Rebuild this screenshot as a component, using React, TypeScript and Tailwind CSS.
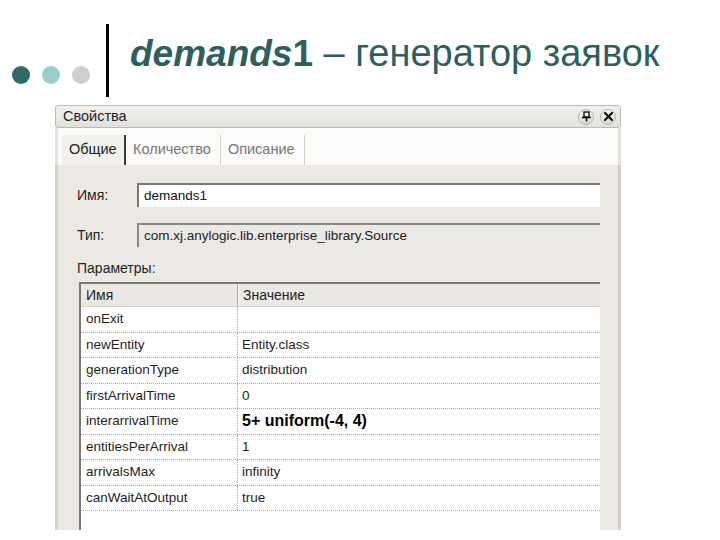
import React from "react";

const rows: { name: string; value: string; bold?: boolean }[] = [
  { name: "onExit", value: "" },
  { name: "newEntity", value: "Entity.class" },
  { name: "generationType", value: "distribution" },
  { name: "firstArrivalTime", value: "0" },
  { name: "interarrivalTime", value: "5+ uniform(-4, 4)", bold: true },
  { name: "entitiesPerArrival", value: "1" },
  { name: "arrivalsMax", value: "infinity" },
  { name: "canWaitAtOutput", value: "true" },
];

function PinIcon() {
  return (
    <svg width="11" height="11" viewBox="0 0 11 11">
      <rect x="3" y="1" width="5" height="5" fill="none" stroke="#111" strokeWidth="1.4" />
      <line x1="1" y1="6.5" x2="10" y2="6.5" stroke="#111" strokeWidth="1.6" />
      <line x1="5.5" y1="6.5" x2="5.5" y2="10.5" stroke="#111" strokeWidth="1.6" />
    </svg>
  );
}

function XIcon() {
  return (
    <svg width="11" height="11" viewBox="0 0 11 11">
      <path d="M2 2 L9 9 M9 2 L2 9" stroke="#111" strokeWidth="2.2" strokeLinecap="round" />
    </svg>
  );
}

export default function App() {
  return (
    <div
      className="w-[720px] h-[540px] bg-white overflow-hidden"
      style={{ fontFamily: '"Liberation Sans", Arial, sans-serif' }}
    >
      {/* Header */}
      <div className="h-[105px] flex items-start pl-[12px] pt-[24px]">
        <div className="mt-[42px] flex gap-[12px]">
          <div className="w-[18px] h-[18px] rounded-full bg-[#2e6a6a]" />
          <div className="w-[18px] h-[18px] rounded-full bg-[#97cfd0]" />
          <div className="w-[18px] h-[18px] rounded-full bg-[#cfcfcf]" />
        </div>
        <div className="ml-[16px] w-[3px] h-[73px] bg-black" />
        <div className="ml-[21px] mt-[7px] text-[38px] leading-[44px] text-[#2c5f5d] whitespace-nowrap">
          <span className="font-bold italic text-[37px]">demands</span>
          <span className="font-bold text-[37px]">1</span>
          <span> – генератор заявок</span>
        </div>
      </div>

      {/* Panel */}
      <div className="ml-[55px] w-[566px] h-[425px] flex flex-col text-[#1f1f1f]">
        {/* Title bar */}
        <div className="h-[23px] flex items-center justify-between pl-[7px] pr-[4px] border border-[#bdbab3] rounded-[3px] bg-gradient-to-b from-[#f2f1ee] to-[#e3e1db]">
          <span className="text-[14.5px]">Свойства</span>
          <div className="flex gap-[6px]">
            <div className="w-[16px] h-[16px] rounded-full border border-[#b8b5ae] bg-gradient-to-b from-[#fafaf8] to-[#d9d6cf] flex items-center justify-center">
              <PinIcon />
            </div>
            <div className="w-[16px] h-[16px] rounded-full border border-[#b8b5ae] bg-gradient-to-b from-[#fafaf8] to-[#d9d6cf] flex items-center justify-center">
              <XIcon />
            </div>
          </div>
        </div>

        {/* Tabs */}
        <div className="h-[37px] flex items-end bg-[#fbfbf9] border-l-[3px] border-r-[3px] border-[#e4e2dd] text-[14.5px]">
          <div className="ml-[4px] h-[30px] w-[64px] bg-[#f1f0ec] flex items-center pl-[7px] border-r-2 border-[#3a3a3a]">
            Общие
          </div>
          <div className="h-[30px] flex items-center pl-[7px] pr-[9px] text-[#777] border-r border-[#d0cdc6]">
            Количество
          </div>
          <div className="h-[30px] flex items-center pl-[7px] pr-[9px] text-[#777] border-r border-[#d0cdc6]">
            Описание
          </div>
        </div>

        {/* Content */}
        <div className="flex-1 bg-[#ece9e4] border-l-[3px] border-r-[3px] border-[#d3d0ca] pt-[18px] pl-[19px] pr-[18px] overflow-hidden text-[13.5px]">
          <div className="flex items-center">
            <span className="w-[60px] text-[14px]">Имя:</span>
            <div className="flex-1 h-[24px] bg-white border-t-2 border-l-2 border-[#7a7873] flex items-center pl-[5px] text-[#111]">
              demands1
            </div>
          </div>
          <div className="flex items-center mt-[16px]">
            <span className="w-[60px] text-[14px]">Тип:</span>
            <div className="flex-1 h-[24px] bg-[#ebe9e5] border-t-2 border-l-2 border-[#8a8883] flex items-center pl-[5px] text-[#222]">
              com.xj.anylogic.lib.enterprise_library.Source
            </div>
          </div>
          <div className="mt-[13px] leading-[16px] text-[14px]">Параметры:</div>
          <div className="mt-[6px] ml-[2px] bg-white border-t-2 border-l-2 border-[#7a7873] h-[260px]">
            <div className="h-[23px] flex bg-[#ebe8e3] border-b border-[#d5d2cc] text-[14px]">
              <div className="w-[157px] pl-[5px] flex items-center border-r border-[#aaa7a0]">Имя</div>
              <div className="flex-1 pl-[4px] flex items-center border-l border-white">Значение</div>
            </div>
            {rows.map((r) => (
              <div key={r.name} className="h-[25.5px] flex border-b border-dotted border-[#a9a9a9]">
                <div className="w-[157px] pl-[5px] flex items-center border-r border-dotted border-[#a9a9a9]">
                  {r.name}
                </div>
                <div className={"flex-1 pl-[4px] flex items-center " + (r.bold ? "font-bold text-[16px] text-black" : "")}>
                  {r.value}
                </div>
              </div>
            ))}
          </div>
        </div>
      </div>
    </div>
  );
}
